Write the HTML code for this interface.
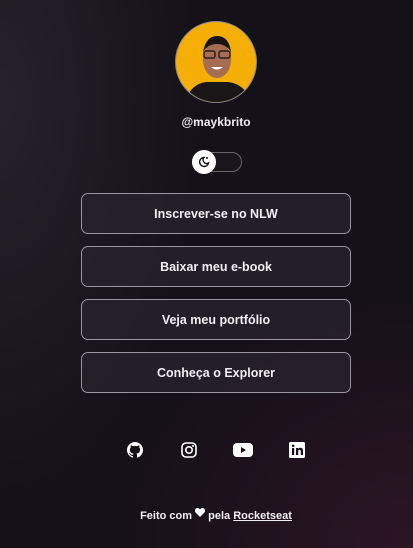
<!DOCTYPE html>
<html><head><meta charset="utf-8"><style>
*{margin:0;padding:0;box-sizing:border-box}
html,body{width:413px;height:548px;overflow:hidden}
body{font-family:"Liberation Sans",sans-serif;color:#f0eef2;position:relative;
background:radial-gradient(ellipse 300px 260px at 413px 548px,#2c1524 0%,rgba(44,21,36,0) 100%),
radial-gradient(ellipse 200px 400px at 0px 100px,#26222b 0%,rgba(38,34,43,0) 100%),#141118;}
.av{position:absolute;left:175px;top:21px;width:82px;height:82px;border-radius:50%;background:#f5ae05;border:1.5px solid #8a8590;overflow:hidden}
.h{position:absolute;top:115px;left:116px;width:200px;text-align:center;font-weight:bold;font-size:12px}
.tg{position:absolute;left:192px;top:152px;width:50px;height:20px;border-radius:10px;border:1px solid #6a6670;background:#18161b}
.kn{position:absolute;left:192px;top:150px;width:24px;height:24px;border-radius:50%;background:#fff}
.b{position:absolute;left:81px;width:270px;height:41px;border:1px solid #9a96a0;border-radius:7px;background:rgba(40,36,46,.75);text-align:center;line-height:41px;font-weight:bold;font-size:12.5px}
.ic{position:absolute;top:442px}
.f{position:absolute;top:508px;left:66px;width:300px;text-align:center;font-size:11px;font-weight:bold}
</style></head><body>
<div class="av"><svg width="82" height="82" viewBox="0 0 82 82">
<path d="M8 82 Q14 62 30 60 L52 60 Q70 62 76 82Z" fill="#1a1718"/>
<ellipse cx="41" cy="38" rx="14" ry="18" fill="#a56d52"/>
<path d="M27 30 Q30 14 41 14 Q53 14 55 30 Q50 22 41 22 Q32 22 27 30Z" fill="#1b1414"/>
<rect x="28" y="29" width="11" height="7" rx="2" fill="none" stroke="#2a2020" stroke-width="1.5"/>
<rect x="43" y="29" width="11" height="7" rx="2" fill="none" stroke="#2a2020" stroke-width="1.5"/>
<path d="M35 45 Q41 50 47 45" fill="#fff"/></svg></div>
<div class="h">@maykbrito</div>
<div class="tg"></div>
<div class="kn"><svg width="24" height="24" viewBox="0 0 24 24"><path d="M12 7.5a4.5 4.5 0 1 0 4.5 5.5 3.6 3.6 0 0 1-4.5-5.5z" fill="none" stroke="#111" stroke-width="1.4"/><path d="M15 7v2M14 8h2" stroke="#111" stroke-width="1"/></svg></div>
<div class="b" style="top:193px">Inscrever-se no NLW</div>
<div class="b" style="top:246px">Baixar meu e-book</div>
<div class="b" style="top:299px">Veja meu portfólio</div>
<div class="b" style="top:352px">Conheça o Explorer</div>
<svg class="ic" style="left:127px" width="16" height="16" viewBox="0 0 16 16"><path fill="#fff" d="M8 0C3.58 0 0 3.58 0 8c0 3.54 2.29 6.53 5.47 7.59.4.07.55-.17.55-.38v-1.33c-2.23.48-2.7-1.070-2.7-1.07-.36-.92-.89-1.17-.89-1.17-.73-.5.05-.49.05-.49.8.06 1.23.83 1.23.83.72 1.22 1.87.87 2.33.66.07-.52.28-.87.51-1.07-1.78-.2-3.640-.89-3.64-3.95 0-.87.31-1.59.82-2.15-.08-.2-.36-1.02.08-2.12 0 0 .67-.21 2.2.82.64-.18 1.32-.27 2-.27s1.36.09 2 .27c1.53-1.04 2.2-.82 2.2-.82.44 1.1.16 1.92.08 2.12.51.56.82 1.27.82 2.15 0 3.07-1.87 3.75-3.65 3.95.29.25.54.73.54 1.48v2.2c0 .21.15.46.55.38A8 8 0 0 0 16 8c0-4.42-3.58-8-8-8z"/></svg>
<svg class="ic" style="left:181px" width="16" height="16" viewBox="0 0 16 16"><rect x="1" y="1" width="14" height="14" rx="4" fill="none" stroke="#fff" stroke-width="1.6"/><circle cx="8" cy="8" r="3.2" fill="none" stroke="#fff" stroke-width="1.6"/><circle cx="12" cy="4" r="1" fill="#fff"/></svg>
<svg class="ic" style="left:233px" width="20" height="16" viewBox="0 0 20 16"><rect x="0" y="1" width="20" height="14" rx="4" fill="#fff"/><path d="M8 5l5 3-5 3z" fill="#141118"/></svg>
<svg class="ic" style="left:289px" width="16" height="16" viewBox="0 0 16 16"><rect width="16" height="16" rx="1.5" fill="#fff"/><rect x="3" y="6" width="2.2" height="7" fill="#141118"/><circle cx="4.1" cy="3.8" r="1.3" fill="#141118"/><path d="M7 6h2.1v1c.5-.8 1.3-1.2 2.3-1.2 1.8 0 2.6 1.1 2.6 3V13h-2.2V9.3c0-1-.4-1.6-1.2-1.6s-1.4.6-1.4 1.6V13H7z" fill="#141118"/></svg>
<div class="f">Feito com <svg width="10" height="9" viewBox="0 0 10 9" style="vertical-align:2px"><path d="M5 9L1 5C-1 3 0 0 2.5 0 3.7 0 4.5.8 5 1.5 5.5.8 6.3 0 7.5 0 10 0 11 3 9 5z" fill="#fff"/></svg> pela <span style="text-decoration:underline">Rocketseat</span></div>
</body></html>
